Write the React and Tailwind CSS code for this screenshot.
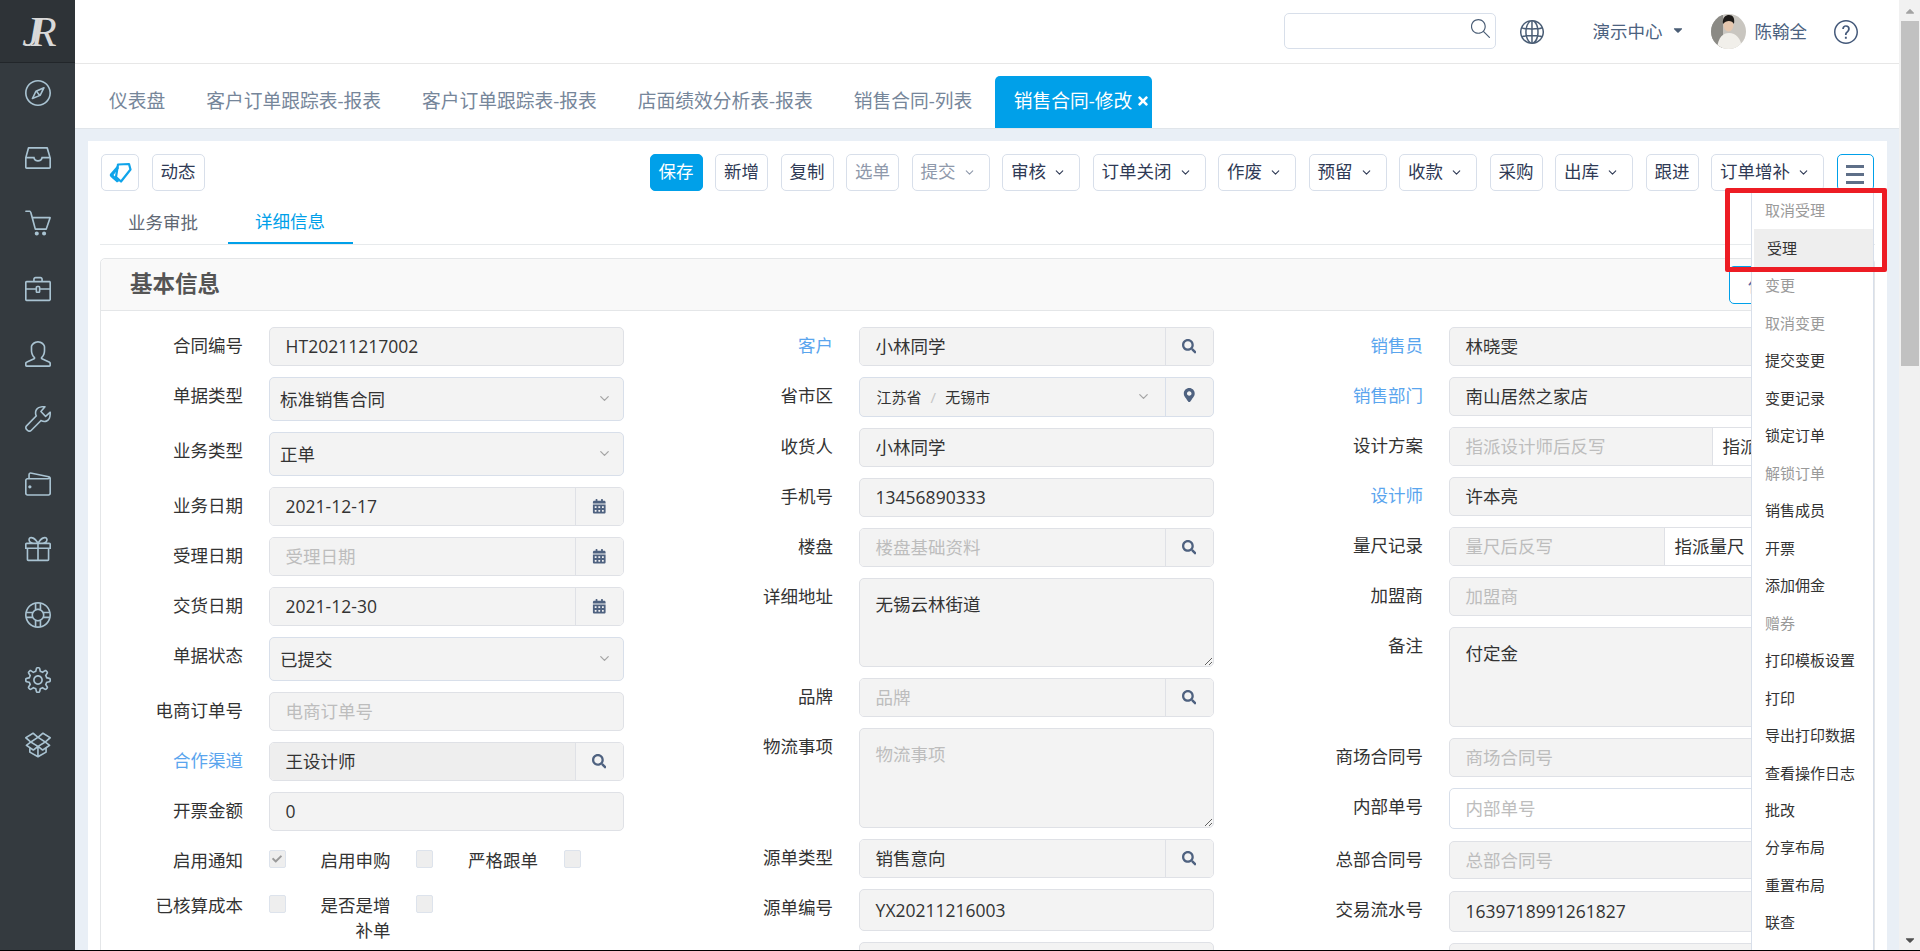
import React from "react";
import { ChevronDown } from "lucide-react";
import { FaSearch, FaCalendarAlt, FaMapMarkerAlt, FaTimes, FaCheck, FaCaretDown, FaCaretUp } from "react-icons/fa";
import {
  SlCompass, SlDrawer, SlBasket, SlBriefcase, SlUser, SlWrench, SlWallet, SlPresent, SlSupport, SlSettings, SlSocialDropbox,
  SlMagnifier, SlGlobe, SlQuestion,
} from "react-icons/sl";

const navIcons = [SlCompass, SlDrawer, SlBasket, SlBriefcase, SlUser, SlWrench, SlWallet, SlPresent, SlSupport, SlSettings, SlSocialDropbox];

function Sidebar() {
  return (
    <aside className="w-[75px] shrink-0 bg-[#343a3f] flex flex-col items-center">
      <div className="w-full h-[63px] shrink-0 bg-[#2e3337] border-b border-[#22262a] flex items-center justify-center">
        <span className="[font-family:'Liberation_Serif',serif] italic text-[42px] leading-none text-[#d9d9d9] tracking-[-10px] pr-[6px] pt-[2px]">JR</span>
      </div>
      <div className="flex flex-col items-center mt-[17px] gap-[39.2px] text-[#a9c3d2]">
        {navIcons.map((I, i) => <I key={i} className="w-[26px] h-[26px]" />)}
      </div>
    </aside>
  );
}

function Avatar() {
  return (
    <svg viewBox="0 0 35 35" className="w-[35px] h-[35px] rounded-full ml-[26px]">
      <rect width="35" height="35" fill="#c9c6c0" />
      <rect x="0" y="0" width="12" height="35" fill="#8b8a85" />
      <path d="M6 35 C7 23 12 19 18 19 C25 19 30 24 31 35Z" fill="#f1efea" />
      <ellipse cx="17.5" cy="11" rx="5" ry="6.5" fill="#e6c7ae" />
      <path d="M12 10 C11 3 15 1 18 1 C22 1 24 4 23 10 C21 6 15 6 12 10Z" fill="#1d1a18" />
    </svg>
  );
}

function TopBar() {
  return (
    <header className="h-[64px] shrink-0 bg-white border-b border-[#e7e7e7] flex items-center justify-end pr-[41px] text-[17.5px] text-[#4c6280]">
      <div className="w-[212px] h-[36px] -mt-[2px] rounded-[5px] border border-[#d8dfea] flex items-center justify-end pr-[5px]">
        <SlMagnifier className="w-[19px] h-[19px] text-[#4a5d75] -mt-[5px]" />
      </div>
      <SlGlobe className="w-[24px] h-[24px] ml-[24px] text-[#4a5d75]" />
      <span className="ml-[49px]">演示中心</span>
      <FaCaretDown className="w-[14px] h-[14px] ml-[8px] -mt-[3px] text-[#4a5d75]" />
      <Avatar />
      <span className="ml-[9px]">陈翰全</span>
      <SlQuestion className="w-[24px] h-[24px] ml-[27px] text-[#44597a]" />
    </header>
  );
}

function Tabs() {
  const tabs = ["仪表盘", "客户订单跟踪表-报表", "客户订单跟踪表-报表", "店面绩效分析表-报表", "销售合同-列表"];
  return (
    <nav className="h-[65px] shrink-0 bg-white border-b border-[#e0e5ea] flex items-end pl-[13.5px] text-[18.75px] text-[#76869a]">
      {tabs.map((t, i) => (
        <div key={i} className="h-[52px] px-[20.5px] flex items-center pb-[2px]">{t}</div>
      ))}
      <div className="h-[52px] ml-[2px] pl-[19px] pr-[2px] rounded-t-[5px] bg-[#00a0e9] text-white flex items-center pb-[2px]">
        销售合同-修改
        <FaTimes className="w-[14px] h-[14px] ml-[4px]" />
      </div>
    </nav>
  );
}

function Btn({ children, caret, disabled, primary }) {
  const tone = primary
    ? "bg-[#00a0e9] border-[#00a0e9] text-white"
    : disabled
    ? "bg-white border-[#d8dfea] text-[#8f99ab]"
    : "bg-white border-[#d8dfea] text-[#2f3a55]";
  return (
    <button className={`h-[37px] border rounded-[5px] flex items-center pb-[3px] ${caret ? "pl-[8px] pr-[13px]" : "px-[8px]"} ${tone}`}>
      {children}
      {caret && <ChevronDown className="w-[13px] h-[13px] ml-[7px] mt-[3px]" strokeWidth={2} />}
    </button>
  );
}

function Toolbar() {
  return (
    <div className="flex items-center text-[17.5px] pl-[1px] pr-[1.5px]">
      <button className="w-[38px] h-[37px] border border-[#d8dfea] rounded-[5px] flex items-center justify-center">
        <svg viewBox="0 0 24 22" className="w-[24px] h-[22px]" fill="none">
          <path d="M10 2.5 L21 2 L22.5 7.5 L13 19.5 L8 15 Z" stroke="#0fa4ea" strokeWidth="2.2" strokeLinejoin="round" />
          <path d="M9 4 L2 12 C1.4 13.5 2 14.4 3 15.2 L9 20.5 L11.5 19 L5.5 13 L11 6 Z" fill="#0fa4ea" />
        </svg>
      </button>
      <div className="ml-[12.5px]"><Btn>动态</Btn></div>
      <div className="ml-auto flex items-center gap-[12.5px]">
        <Btn primary>保存</Btn>
        <Btn>新增</Btn>
        <Btn>复制</Btn>
        <Btn disabled>选单</Btn>
        <Btn disabled caret>提交</Btn>
        <Btn caret>审核</Btn>
        <Btn caret>订单关闭</Btn>
        <Btn caret>作废</Btn>
        <Btn caret>预留</Btn>
        <Btn caret>收款</Btn>
        <Btn>采购</Btn>
        <Btn caret>出库</Btn>
        <Btn>跟进</Btn>
        <Btn caret>订单增补</Btn>
        <button className="w-[37px] h-[37px] border border-[#00a0e9] rounded-[5px] bg-white flex flex-col items-center justify-center gap-[5.5px] pt-[4px]">
          <span className="block w-[18px] h-[2.5px] bg-[#5e6f88]" />
          <span className="block w-[18px] h-[2.5px] bg-[#5e6f88]" />
          <span className="block w-[18px] h-[2.5px] bg-[#5e6f88]" />
        </button>
      </div>
    </div>
  );
}

function SubTabs() {
  return (
    <div className="mt-[10px] h-[44px] border-b border-[#e7eaec] flex text-[17.5px]">
      <div className="w-[128px] pl-[28px] h-[43px] flex items-center text-[#5f6874]">业务审批</div>
      <div className="w-[125px] pl-[27px] h-[43px] flex items-center text-[#00a0e9] border-b-2 border-[#00a0e9]">详细信息</div>
    </div>
  );
}

const boxBase = "rounded-[5px] border border-[#dfe1e6] bg-[#f3f3f3]";

function Label({ children, link, w = "w-[142px]" }) {
  return <div className={`${w} shrink-0 text-right leading-[36px] ${link ? "text-[#5aa5ee]" : "text-[#333]"}`}>{children}</div>;
}

function Row({ label, link, children, className = "" }) {
  return (
    <div className={`flex items-start ${className}`}>
      <Label link={link}>{label}</Label>
      <div className="ml-[25.6px] w-[355px] shrink-0">{children}</div>
    </div>
  );
}

function Txt({ value, ph, h = "h-[39px]", pl = "pl-[16px]" }) {
  return (
    <div className={`${boxBase} ${h} ${pl} flex items-center ${ph ? "text-[#bdbdbd]" : "text-[#333]"}`}>{value || ph}</div>
  );
}

function Select({ value }) {
  return (
    <div className={`rounded-[5px] border border-[#d8dfea] bg-[#f3f3f3] h-[44px] pl-[10.5px] pr-[11px] flex items-center justify-between text-[#333]`}>
      {value}
      <ChevronDown className="w-[15px] h-[15px] text-[#a5a5a5] -mt-[2px]" strokeWidth={2} />
    </div>
  );
}

function Addon({ value, ph, icon, bg = "bg-[#f3f3f3]" }) {
  const I = icon;
  return (
    <div className="rounded-[5px] border border-[#dfe1e6] h-[39px] flex overflow-hidden">
      <div className={`${bg} flex-1 pl-[16px] flex items-center ${ph ? "text-[#bdbdbd]" : "text-[#333]"}`}>{value || ph}</div>
      <div className="w-[48px] bg-[#f3f3f3] border-l border-[#dfe1e6] flex items-center justify-center text-[#4f6280]">
        <I className="w-[14.5px] h-[14.5px]" />
      </div>
    </div>
  );
}

function Area({ value, ph, h }) {
  return (
    <div className={`${boxBase} ${h} pl-[16px] pt-[12px] leading-[26px] resize overflow-auto ${ph ? "text-[#bdbdbd]" : "text-[#333]"}`}>{value || ph}</div>
  );
}

function Check({ checked, className = "" }) {
  return (
    <div className={`w-[17px] h-[18px] shrink-0 mt-[8px] rounded-[2px] border border-[#dde3ec] bg-[#eeeeee] flex items-center justify-center ${className}`}>
      {checked && <FaCheck className="w-[10px] h-[10px] text-[#9a9a9a]" />}
    </div>
  );
}

function Col1() {
  return (
    <div className="flex flex-col gap-[11px]">
      <Row label="合同编号"><Txt value="HT20211217002" /></Row>
      <Row label="单据类型"><Select value="标准销售合同" /></Row>
      <Row label="业务类型"><Select value="正单" /></Row>
      <Row label="业务日期"><Addon value="2021-12-17" icon={FaCalendarAlt} /></Row>
      <Row label="受理日期"><Addon ph="受理日期" icon={FaCalendarAlt} /></Row>
      <Row label="交货日期"><Addon value="2021-12-30" icon={FaCalendarAlt} /></Row>
      <Row label="单据状态"><Select value="已提交" /></Row>
      <Row label="电商订单号"><Txt ph="电商订单号" /></Row>
      <Row label="合作渠道" link><Addon value="王设计师" icon={FaSearch} bg="bg-[#eeeeee]" /></Row>
      <Row label="开票金额"><Txt value="0" /></Row>
      <div className="flex items-start">
        <Label>启用通知</Label>
        <Check checked className="ml-[25.6px]" />
        <Label w="w-[70px] ml-[35px]">启用申购</Label>
        <Check className="ml-[25px]" />
        <Label w="w-[70px] ml-[35.5px]">严格跟单</Label>
        <Check className="ml-[25.5px]" />
      </div>
      <div className="flex items-start -mt-[2px]">
        <Label>已核算成本</Label>
        <Check className="ml-[25.6px]" />
        <div className="w-[71px] ml-[34px] text-right leading-[25px] pt-[6px] text-[#333]">是否是增补单</div>
        <Check className="ml-[25px]" />
      </div>
    </div>
  );
}

function Col2() {
  return (
    <div className="flex flex-col gap-[11px]">
      <Row label="客户" link><Addon value="小林同学" icon={FaSearch} /></Row>
      <Row label="省市区">
        <div className="rounded-[5px] border border-[#d8dfea] h-[40px] flex overflow-hidden bg-[#f3f3f3]">
          <div className="flex-1 pl-[17px] pr-[14px] flex items-center text-[15px] text-[#333]">
            <span>江苏省</span>
            <span className="mx-[9px] text-[#c5c5c5]">/</span>
            <span>无锡市</span>
            <ChevronDown className="w-[15px] h-[15px] text-[#a5a5a5] ml-auto -mt-[2px]" strokeWidth={2} />
          </div>
          <div className="w-[48px] border-l border-[#d8dfea] flex items-center justify-center text-[#4f6280]">
            <FaMapMarkerAlt className="w-[14.5px] h-[14.5px] -mt-[4px]" />
          </div>
        </div>
      </Row>
      <Row label="收货人"><Txt value="小林同学" /></Row>
      <Row label="手机号"><Txt value="13456890333" /></Row>
      <Row label="楼盘"><Addon ph="楼盘基础资料" icon={FaSearch} /></Row>
      <Row label="详细地址"><Area value="无锡云林街道" h="h-[89px]" /></Row>
      <Row label="品牌"><Addon ph="品牌" icon={FaSearch} /></Row>
      <Row label="物流事项"><Area ph="物流事项" h="h-[100px]" /></Row>
      <Row label="源单类型"><Addon value="销售意向" icon={FaSearch} /></Row>
      <Row label="源单编号"><Txt value="YX20211216003" h="h-[42px]" /></Row>
      <Row label="&nbsp;"><Txt value="" h="h-[39px]" /></Row>
    </div>
  );
}

function SplitField({ ph, btn, w }) {
  return (
    <div className="rounded-[5px] border border-[#dfe1e6] h-[39px] flex overflow-hidden bg-white">
      <div className={`${w} shrink-0 bg-[#f3f3f3] pl-[16px] flex items-center text-[#bdbdbd] border-r border-[#dfe1e6]`}>{ph}</div>
      <div className="pl-[10px] flex items-center text-[#333] whitespace-nowrap">{btn}</div>
    </div>
  );
}

function Col3() {
  return (
    <div className="flex flex-col gap-[11px]">
      <Row label="销售员" link><Txt value="林晓雯" /></Row>
      <Row label="销售部门" link><Txt value="南山居然之家店" /></Row>
      <Row label="设计方案"><SplitField ph="指派设计师后反写" btn="指派设计师" w="w-[263px]" /></Row>
      <Row label="设计师" link><Txt value="许本亮" /></Row>
      <Row label="量尺记录"><SplitField ph="量尺后反写" btn="指派量尺" w="w-[215px]" /></Row>
      <Row label="加盟商"><Txt ph="加盟商" /></Row>
      <Row label="备注"><div className={`${boxBase} h-[100px] pl-[16px] pt-[12px] leading-[26px] text-[#333]`}>付定金</div></Row>
      <Row label="商场合同号"><Txt ph="商场合同号" /></Row>
      <Row label="内部单号">
        <div className="rounded-[5px] border border-[#d8dfea] bg-white h-[41px] pl-[16px] flex items-center text-[#bdbdbd]">内部单号</div>
      </Row>
      <Row label="总部合同号" className="mt-[1px]"><Txt ph="总部合同号" h="h-[38px]" /></Row>
      <Row label="交易流水号" className="mt-[1px]"><Txt value="1639718991261827" h="h-[41px]" /></Row>
      <Row label="&nbsp;"><Txt value="" h="h-[39px]" /></Row>
    </div>
  );
}

function Card() {
  return (
    <section className="mt-[13px] rounded-t-[5px] border border-[#e4e6e8] bg-white">
      <div className="h-[52px] bg-[#f9f9f9] border-b border-[#e4e6e8] flex items-center justify-between pl-[29px] pr-[15px] rounded-t-[5px]">
        <h2 className="text-[22.5px] font-bold text-[#555] -mt-[1px]">基本信息</h2>
        <button className="w-[130px] h-[38px] mt-[1px] border border-[#00a0e9] rounded-[5px] bg-white text-left pl-[18px] text-[#5567a8]">保存</button>
      </div>
      <div className="pt-[16px] grid grid-cols-[590px_590px_590px]">
        <Col1 />
        <Col2 />
        <Col3 />
      </div>
    </section>
  );
}

const menuItems = [
  ["取消受理", 1], ["受理", 0], ["变更", 1], ["取消变更", 1], ["提交变更", 0], ["变更记录", 0], ["锁定订单", 0], ["解锁订单", 1],
  ["销售成员", 0], ["开票", 0], ["添加佣金", 0], ["赠券", 1], ["打印模板设置", 0], ["打印", 0], ["导出打印数据", 0], ["查看操作日志", 0],
  ["批改", 0], ["分享布局", 0], ["重置布局", 0], ["联查", 0],
];

function Menu() {
  return (
    <div className="absolute right-[25.5px] top-[191px] w-[122.5px] bottom-0 overflow-hidden bg-white border-x border-[#d8dfea] text-[15px]">
      {menuItems.map(([t, d], i) => (
        <div
          key={i}
          className={`h-[37.47px] pl-[13px] flex items-center ${d ? "text-[#9a9a9a]" : "text-[#333]"} ${i === 1 ? "bg-[#eeeeee] ml-[2px] pl-[11px]" : ""} ${i === 0 ? "mt-px" : ""}`}
        >
          {t}
        </div>
      ))}
    </div>
  );
}

function Scrollbar() {
  return (
    <div className="w-[21px] shrink-0 bg-[#f1f1f1] flex flex-col items-center">
      <div className="h-[21px] shrink-0 flex items-center justify-center">
        <FaCaretUp className="w-[14px] h-[14px] text-[#a3a3a3]" />
      </div>
      <div className="w-[18px] h-[345px] bg-[#c1c1c1] shrink-0" />
      <div className="mt-auto h-[21px] shrink-0 flex items-center justify-center">
        <FaCaretDown className="w-[14px] h-[14px] text-[#505050]" />
      </div>
    </div>
  );
}

export default function App() {
  return (
    <div className="w-[1920px] h-[951px] overflow-hidden flex flex-col [font-family:'Open_Sans','Noto_Sans_CJK_SC',sans-serif] text-[17.5px]">
      <div className="h-[950px] flex shrink-0">
        <Sidebar />
        <main className="relative flex-1 min-w-0 flex flex-col overflow-hidden bg-[#e9eff6]">
          <TopBar />
          <Tabs />
          <div className="mt-[12px] ml-[13px] mr-[12px] flex-1 bg-white pt-[13px] px-[12px] overflow-hidden">
            <Toolbar />
            <SubTabs />
            <Card />
          </div>
          <Menu />
          <div className="absolute right-[12px] top-[188px] w-[162px] h-[84px] border-[5px] border-[#ed1c24] rounded-[2px]" />
        </main>
        <Scrollbar />
      </div>
      <div className="h-px shrink-0 bg-black" />
    </div>
  );
}
